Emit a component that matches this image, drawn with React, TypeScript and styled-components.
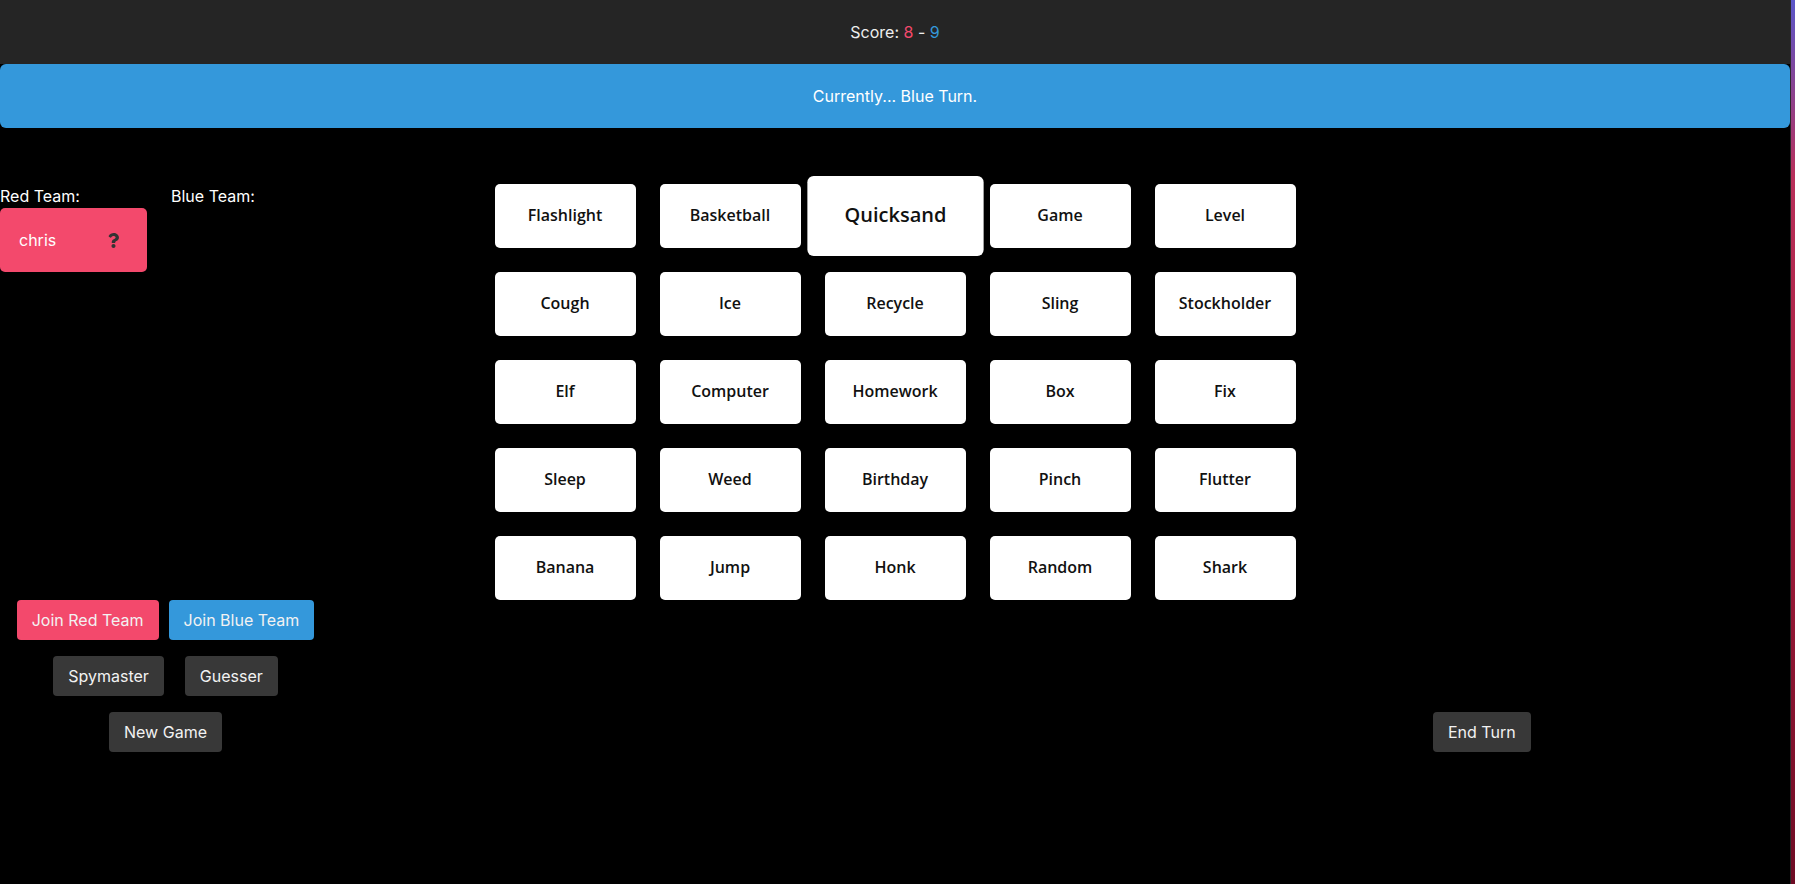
import styled, { createGlobalStyle } from "styled-components";
import { FaQuestion } from "react-icons/fa";

const GlobalStyle = createGlobalStyle`
  body {
    margin: 0;
    background-color: #000;
    font-family: Inter, "Liberation Sans", sans-serif;
  }
`;

const words: string[] = [
  "Flashlight", "Basketball", "Quicksand", "Game", "Level",
  "Cough", "Ice", "Recycle", "Sling", "Stockholder",
  "Elf", "Computer", "Homework", "Box", "Fix",
  "Sleep", "Weed", "Birthday", "Pinch", "Flutter",
  "Banana", "Jump", "Honk", "Random", "Shark",
];

const RED = "#f3496c";
const BLUE = "#3498db";

const Page = styled.div`
  display: flex;
  min-height: 100vh;
`;

const Main = styled.div`
  flex: 1;
  display: flex;
  flex-direction: column;
`;

const EdgeStrip = styled.div`
  width: 4px;
  border-left: 1px solid #2a2a2a;
  background: linear-gradient(#5a56c8 0%, #b8305a 20%, #a81f3e 50%, #6e0c24 100%);
`;

const ScoreBar = styled.div`
  height: 64px;
  display: flex;
  align-items: center;
  justify-content: center;
  background-color: #252525;
  color: #eee;
  font-size: 16px;
`;

const ScoreNum = styled.span<{ $color: string }>`
  color: ${(p) => p.$color};
`;

const TurnBanner = styled.div`
  height: 64px;
  display: flex;
  align-items: center;
  justify-content: center;
  background-color: ${BLUE};
  border-radius: 6px;
  color: #fff;
  font-size: 16px;
`;

const Board = styled.div`
  display: grid;
  grid-template-columns: 1fr 801px 1fr;
  padding-top: 56px;
`;

const Teams = styled.div`
  display: flex;
  gap: 24px;
  padding-top: 2px;
`;

const TeamColumn = styled.div`
  display: flex;
  flex-direction: column;
  width: 147px;
`;

const TeamLabel = styled.div`
  color: #fff;
  font-size: 16px;
  line-height: 21px;
  padding-bottom: 1px;
`;

const PlayerCard = styled.div<{ $color: string }>`
  display: flex;
  align-items: center;
  justify-content: space-between;
  height: 64px;
  padding: 0 26px 0 19px;
  background-color: ${(p) => p.$color};
  border-radius: 5px;
  color: #fff;
  font-size: 16px;
`;

const WordGrid = styled.div`
  display: grid;
  grid-template-columns: repeat(5, 141px);
  grid-auto-rows: 64px;
  gap: 24px;
`;

const WordCard = styled.div<{ $active?: boolean }>`
  display: flex;
  align-items: center;
  justify-content: center;
  padding-bottom: 2px;
  background-color: #fff;
  border-radius: 5px;
  color: #111;
  font-family: "Open Sans", Lato, sans-serif;
  font-size: 16px;
  line-height: 1;
  font-weight: 600;
  transform: ${(p) => (p.$active ? "scale(1.25)" : "none")};
`;

const Controls = styled.div`
  display: flex;
  align-items: flex-end;
`;

const ControlColumn = styled.div`
  width: 331px;
  display: flex;
  flex-direction: column;
  align-items: center;
  gap: 16px;
`;

const ButtonRow = styled.div<{ $gap: number }>`
  display: flex;
  gap: ${(p) => p.$gap}px;
`;

const Button = styled.button<{ $color?: string }>`
  height: 40px;
  padding: 0 15px;
  border: none;
  border-radius: 4px;
  background-color: ${(p) => p.$color || "#383838"};
  color: #f2f2f2;
  font-family: Inter, "Liberation Sans", sans-serif;
  font-size: 16px;
`;

const EndTurnButton = styled(Button)`
  margin-left: 1102px;
`;

const App = (): JSX.Element => {
  return (
    <Page>
      <GlobalStyle />
      <Main>
        <ScoreBar>
          Score:&nbsp;<ScoreNum $color={RED}>8</ScoreNum>&nbsp;-&nbsp;
          <ScoreNum $color={BLUE}>9</ScoreNum>
        </ScoreBar>
        <TurnBanner>Currently... Blue Turn.</TurnBanner>
        <Board>
          <Teams>
            <TeamColumn>
              <TeamLabel>Red Team:</TeamLabel>
              <PlayerCard $color={RED}>
                chris
                <FaQuestion size={15} color="#333" />
              </PlayerCard>
            </TeamColumn>
            <TeamColumn>
              <TeamLabel>Blue Team:</TeamLabel>
            </TeamColumn>
          </Teams>
          <WordGrid>
            {words.map((word) => (
              <WordCard key={word} $active={word === "Quicksand"}>
                {word}
              </WordCard>
            ))}
          </WordGrid>
        </Board>
        <Controls>
          <ControlColumn>
            <ButtonRow $gap={10}>
              <Button $color={RED}>Join Red Team</Button>
              <Button $color={BLUE}>Join Blue Team</Button>
            </ButtonRow>
            <ButtonRow $gap={21}>
              <Button>Spymaster</Button>
              <Button>Guesser</Button>
            </ButtonRow>
            <ButtonRow $gap={0}>
              <Button>New Game</Button>
            </ButtonRow>
          </ControlColumn>
          <EndTurnButton>End Turn</EndTurnButton>
        </Controls>
      </Main>
      <EdgeStrip />
    </Page>
  );
};

export default App;
